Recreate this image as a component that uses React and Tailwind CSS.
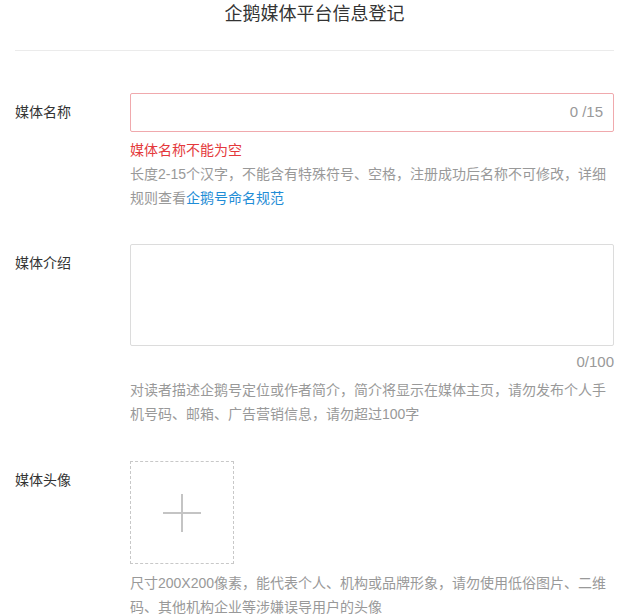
import React from "react";

const font = {
  fontFamily: '"Liberation Sans", "Noto Sans CJK SC", sans-serif',
};

const Row = ({ label, children, className = "" }) => (
  <div className={`flex ${className}`}>
    <div className="w-[115px] shrink-0 pt-[7px] text-[14px] leading-[24px] text-[#333]">
      {label}
    </div>
    <div className="min-w-0 flex-1">{children}</div>
  </div>
);

const Hint = ({ children, className = "" }) => (
  <p className={`text-[14px] leading-[24px] text-[#999] ${className}`}>{children}</p>
);

export default function App() {
  return (
    <div className="min-h-[615px] bg-white pl-[15px] pr-[10px]" style={font}>
      <div className="h-[51px] border-b border-[#ebebeb] text-center">
        <h1 className="pt-[1px] text-[18px] leading-[27px] font-normal text-[#333]">
          企鹅媒体平台信息登记
        </h1>
      </div>

      <Row label="媒体名称" className="mt-[42px]">
        <div className="flex h-[39px] items-center justify-end rounded-[2px] border border-[#f0a9ad] px-[10px]">
          <span className="text-[15px] text-[#999]">0 /15</span>
        </div>
        <p className="mt-[6px] text-[14px] leading-[24px] text-[#e4393c]">媒体名称不能为空</p>
        <Hint>
          长度2-15个汉字，不能含有特殊符号、空格，注册成功后名称不可修改，详细规则查看
          <a className="text-[#1f8dd6]" href="#">
            企鹅号命名规范
          </a>
        </Hint>
      </Row>

      <Row label="媒体介绍" className="mt-[34px]">
        <div className="h-[102px] rounded-[2px] border border-[#dcdcdc]" />
        <div className="mt-[4px] text-right text-[15px] leading-[24px] text-[#999]">0/100</div>
        <Hint className="mt-[4px]">
          对读者描述企鹅号定位或作者简介，简介将显示在媒体主页，请勿发布个人手机号码、邮箱、广告营销信息，请勿超过100字
        </Hint>
      </Row>

      <Row label="媒体头像" className="mt-[35px]">
        <div className="flex h-[103px] w-[104px] items-center justify-center border border-dashed border-[#c8c8c8]">
          <svg width="40" height="40" viewBox="0 0 40 40">
            <path d="M20 1v38M1 20h38" stroke="#c4c4c4" strokeWidth="2" fill="none" />
          </svg>
        </div>
        <Hint className="mt-[7px]">
          尺寸200X200像素，能代表个人、机构或品牌形象，请勿使用低俗图片、二维码、其他机构企业等涉嫌误导用户的头像
        </Hint>
      </Row>
    </div>
  );
}
